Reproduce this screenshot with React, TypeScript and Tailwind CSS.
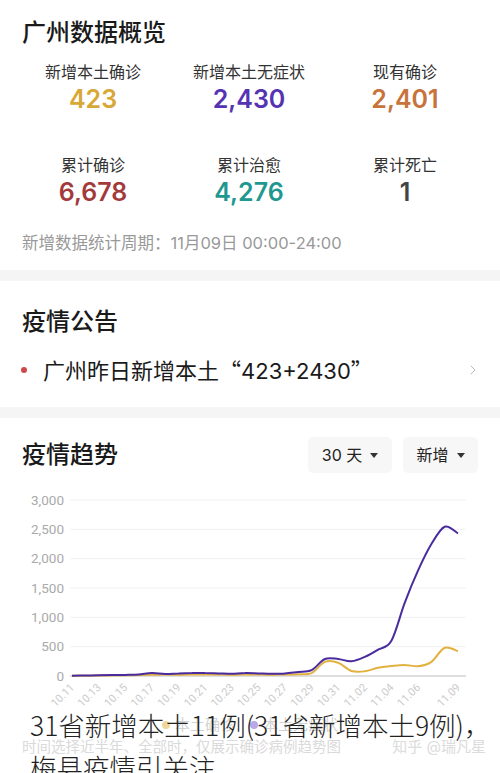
import React from 'react';
import { ChevronRight } from 'lucide-react';

// 30 days: 10.11 .. 11.09
const days: string[] = [
  ...Array.from({ length: 21 }, (_, i) => `10.${String(11 + i)}`),
  ...Array.from({ length: 9 }, (_, i) => `11.0${i + 1}`),
];

const asymptomatic = [5, 8, 12, 15, 18, 25, 50, 35, 45, 50, 50, 45, 40, 50, 45, 40, 45, 70, 100, 290, 290, 250, 325, 450, 600, 1250, 1800, 2250, 2545, 2430];
const confirmed = [3, 5, 8, 10, 12, 15, 20, 25, 20, 25, 25, 25, 20, 25, 25, 20, 25, 30, 50, 240, 225, 85, 80, 140, 170, 190, 165, 240, 480, 425];

const X0 = 72;
const X1 = 458;
const BASE = 196;
const toX = (i: number) => X0 + (i * (X1 - X0)) / 29;
const toY = (v: number) => BASE - (v * 176) / 3000;

function smoothPath(values: number[]) {
  const pts = values.map((v, i) => [toX(i), toY(v)] as [number, number]);
  let d = `M${pts[0][0].toFixed(1)},${pts[0][1].toFixed(1)}`;
  for (let i = 0; i < pts.length - 1; i++) {
    const p0 = pts[i - 1] || pts[i];
    const p1 = pts[i];
    const p2 = pts[i + 1];
    const p3 = pts[i + 2] || p2;
    const c1x = p1[0] + (p2[0] - p0[0]) / 6;
    const c1y = p1[1] + (p2[1] - p0[1]) / 6;
    const c2x = p2[0] - (p3[0] - p1[0]) / 6;
    const c2y = p2[1] - (p3[1] - p1[1]) / 6;
    d += ` C${c1x.toFixed(1)},${c1y.toFixed(1)} ${c2x.toFixed(1)},${c2y.toFixed(1)} ${p2[0].toFixed(1)},${p2[1].toFixed(1)}`;
  }
  return d;
}

const Caret = () => (
  <svg width="8" height="5" viewBox="0 0 8 5" className="shrink-0">
    <path d="M0 0h8L4 5z" fill="#333" />
  </svg>
);

const Stat = ({ label, value, color }: { label: string; value: string; color: string }) => (
  <div className="flex flex-col items-center">
    <div className="text-[16px] leading-[24px] text-[#333]">{label}</div>
    <div className={`text-[25px] leading-[31px] font-semibold ${color}`}>{value}</div>
  </div>
);

const TrendChart = () => {
  const grid = [3000, 2500, 2000, 1500, 1000, 500, 0];
  const labelIdx = [0, 2, 4, 6, 8, 10, 12, 14, 16, 18, 20, 22, 24, 26, 29];
  return (
    <svg width="500" height="232" viewBox="0 0 500 232" className="block">
      {grid.map((g) => (
        <g key={g}>
          <line x1="70" x2="466" y1={toY(g)} y2={toY(g)} stroke={g === 0 ? '#bdbdbd' : '#f0f0f0'} strokeWidth="1" />
          <text x="64" y={toY(g) + 4.5} textAnchor="end" fontSize="13.5" fill="#aaaaaa" fontFamily="Roboto, sans-serif">
            {g.toLocaleString('en-US')}
          </text>
        </g>
      ))}
      <path d={smoothPath(confirmed)} fill="none" stroke="#e2b241" strokeWidth="2" strokeLinejoin="round" />
      <path d={smoothPath(asymptomatic)} fill="none" stroke="#4a2c9e" strokeWidth="2" strokeLinejoin="round" />
      {labelIdx.map((i) => (
        <text
          key={i}
          x={toX(i) + 3}
          y={208}
          textAnchor="end"
          fontSize="11"
          fill="#cbcbcb"
          fontFamily="Roboto, sans-serif"
          transform={`rotate(-45 ${toX(i) + 3} 208)`}
        >
          {days[i]}
        </text>
      ))}
    </svg>
  );
};

export default function App() {
  return (
    <div
      className="relative h-[773px] w-[500px] overflow-hidden bg-[#f5f5f5] text-[#222]"
      style={{ fontFamily: 'Inter, "Noto Sans CJK SC", sans-serif' }}
    >
      {/* 广州数据概览 */}
      <section className="bg-white pt-[16px] pb-[16px]">
        <h1 className="px-[22px] text-[24px] leading-[34px] font-medium text-[#1a1a1a]">广州数据概览</h1>
        <div className="mt-[10px] grid grid-cols-3 gap-y-[38px] pl-[15px] pr-[17px]">
          <Stat label="新增本土确诊" value="423" color="text-[#d8a836]" />
          <Stat label="新增本土无症状" value="2,430" color="text-[#5533b3]" />
          <Stat label="现有确诊" value="2,401" color="text-[#c7733a]" />
          <Stat label="累计确诊" value="6,678" color="text-[#a4393c]" />
          <Stat label="累计治愈" value="4,276" color="text-[#1f9891]" />
          <Stat label="累计死亡" value="1" color="text-[#444]" />
        </div>
        <p className="mt-[24px] px-[22px] text-[16.5px] leading-[22px] text-[#999]">新增数据统计周期：11月09日 00:00-24:00</p>
      </section>

      {/* 疫情公告 */}
      <section className="mt-[11px] bg-white pt-[24px] pb-[22px]">
        <h2 className="px-[22px] text-[24px] leading-[34px] font-medium text-[#1a1a1a]">疫情公告</h2>
        <div className="mt-[16px] flex h-[30px] items-center pl-[21px] pr-[19px]">
          <span className="h-[6px] w-[6px] shrink-0 rounded-full bg-[#d0494a]" />
          <span className="ml-[16px] flex-1 text-[22px] leading-[30px] text-[#1a1a1a]">
            广州昨日新增本土<span style={{ fontFamily: '"Noto Sans CJK SC", sans-serif' }}>“</span>423+2430<span style={{ fontFamily: '"Noto Sans CJK SC", sans-serif' }}>”</span>
          </span>
          <ChevronRight size={16} strokeWidth={1.5} color="#b8b8b8" />
        </div>
      </section>

      {/* 疫情趋势 */}
      <section className="mt-[11px] h-full bg-white pt-[19px]">
        <div className="flex h-[36px] items-center justify-between pl-[22px] pr-[22px]">
          <h2 className="text-[24px] leading-[34px] font-medium text-[#1a1a1a]">疫情趋势</h2>
          <div className="flex gap-[11px]">
            <button className="flex h-[36px] w-[84px] items-center justify-center gap-[8px] rounded-[5px] bg-[#f7f7f7] text-[16px] text-[#222]">
              30 天 <Caret />
            </button>
            <button className="flex h-[36px] w-[75px] items-center justify-center gap-[8px] rounded-[5px] bg-[#f7f7f7] text-[16px] text-[#222]">
              新增 <Caret />
            </button>
          </div>
        </div>
        <div className="mt-[7px]">
          <TrendChart />
        </div>
        <div className="mt-[2px] flex h-[22px] items-center justify-center gap-[15px] text-[15px] text-[#d2d2d2]">
          <div className="flex items-center gap-[5px]">
            <span className="h-[8px] w-[8px] rounded-full bg-[#eed79b]" />
            本土确诊
          </div>
          <div className="flex items-center gap-[5px]">
            <span className="h-[8px] w-[8px] rounded-full bg-[#b9a8e6]" />
            本土无症状
          </div>
        </div>
        <div className="flex h-[22px] items-center justify-between pl-[22px] pr-[14px]">
          <span className="text-[14.5px] text-[#dadada]">时间选择近半年、全部时，仅展示确诊病例趋势图</span>
          <span className="text-[15px] text-[#dcdcdc]">知乎 @瑞凡星</span>
        </div>
      </section>

      {/* caption overlay */}
      <div
        className="absolute left-[30px] top-[704px] whitespace-nowrap text-[26.5px] leading-[42px] font-light text-[#222]"
        style={{ fontFamily: '"Noto Sans CJK SC", sans-serif' }}
      >
        31省新增本土11例(31省新增本土9例)，
        <br />
        梅县疫情引关注
      </div>
    </div>
  );
}
